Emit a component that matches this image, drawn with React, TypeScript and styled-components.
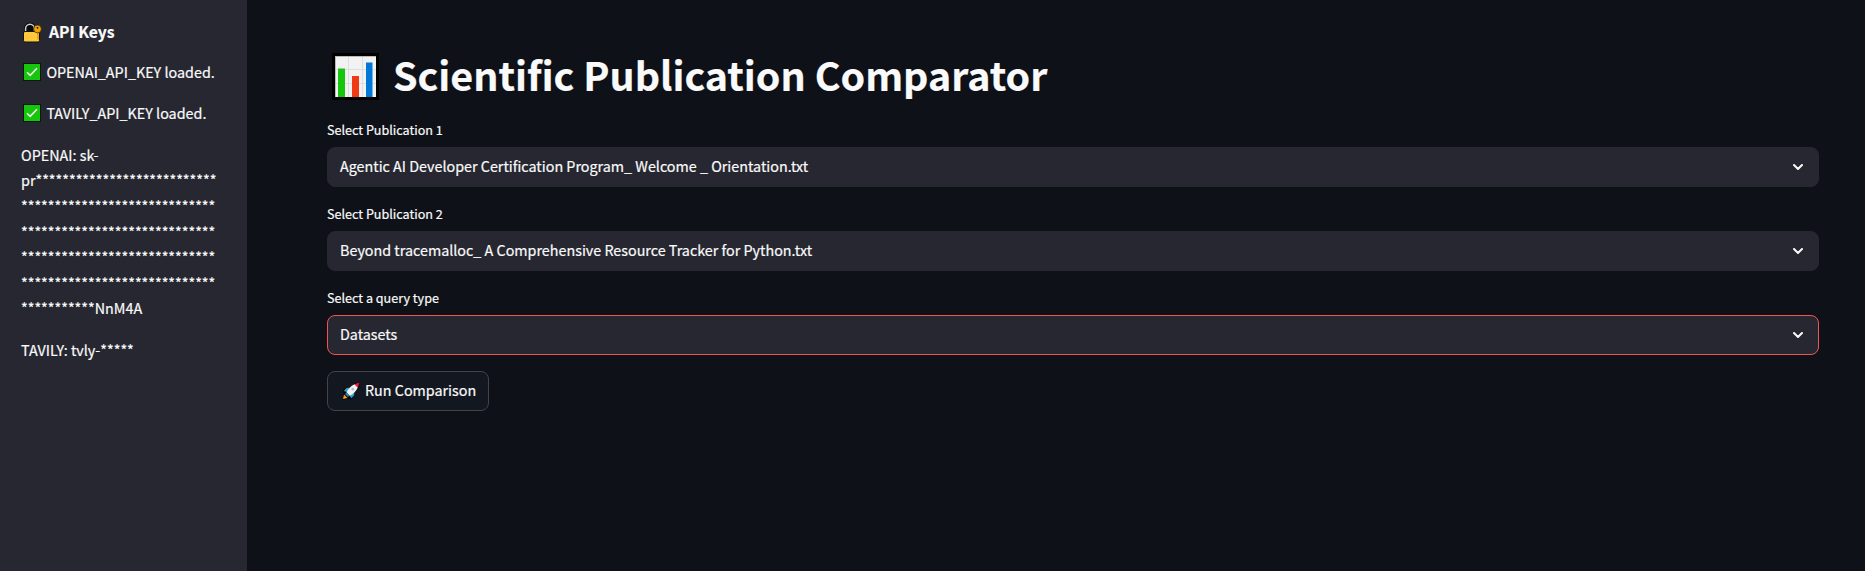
import React from "react";
import styled, { createGlobalStyle } from "styled-components";

const Global = createGlobalStyle`
  *, *::before, *::after { box-sizing: border-box; }
  html, body { margin: 0; padding: 0; background: #0e1117; overflow: hidden; }
  body {
    font-family: "Noto Sans CJK JP", "Noto Sans", sans-serif;
    font-size: 14.35px;
    line-height: 25.6px;
    color: #fafafa;
    -webkit-text-stroke: 0.2px #fafafa;
  }
  h1, h2, p { margin: 0; font-weight: 400; }
  button { font: inherit; color: inherit; }
`;

const Page = styled.div`
  display: flex;
  width: 100%;
  height: 571px;
`;

const Sidebar = styled.aside`
  width: 247px;
  flex: none;
  padding: 19px 20px 0 21px;
  background: #262730;
`;

const SidebarTitle = styled.h2`
  display: flex;
  align-items: center;
  gap: 7px;
  height: 26px;
  margin-bottom: 14px;
  font-size: 15.7px;
  font-weight: 700;
  white-space: nowrap;
`;

const Status = styled.p`
  display: flex;
  align-items: center;
  gap: 5.4px;
  height: 25.6px;
  margin-bottom: 15.8px;
  padding-left: 2px;
  white-space: nowrap;
`;

const KeyText = styled.p`
  margin-bottom: 16px;
  white-space: nowrap;
`;

const Main = styled.main`
  flex: 1;
  padding: 45px 46px 0 80px;
`;

const Title = styled.h1`
  display: flex;
  align-items: center;
  gap: 14px;
  height: 58px;
  margin-bottom: 16px;
  padding-left: 5px;
  font-size: 39.4px;
  line-height: 58px;
  font-weight: 700;
  white-space: nowrap;
`;

const Field = styled.div`
  margin-bottom: 16px;
`;

const Label = styled.div`
  height: 28px;
  line-height: 21px;
  font-size: 12.6px;
`;

const SelectBox = styled.div<{ $focused?: boolean }>`
  display: flex;
  align-items: center;
  justify-content: space-between;
  height: 40px;
  padding: 0 15px 1px 12px;
  border: 1px solid ${(p) => (p.$focused ? "#f05555" : "#262730")};
  border-radius: 8px;
  background: #262730;
`;

const RunButton = styled.button`
  display: flex;
  align-items: center;
  gap: 5px;
  width: 162px;
  height: 40px;
  padding: 0 0 1px 14px;
  border: 1px solid #41444c;
  border-radius: 8px;
  background: #131720;
  white-space: nowrap;
`;

const ControlText = styled.span`
  padding-bottom: 2px;
  font-size: 14.33px;
`;

const Icon = styled.svg`
  display: block;
  flex: none;
`;

const TitleIcon = styled(Icon)`
  margin-top: 4px;
`;

const LockIcon = () => (
  <Icon width="21" height="21" viewBox="0 0 21 21">
    <path d="M4.6 11V6.6a4.4 4.4 0 0 1 8.8 0V11" fill="#0b0b0d" stroke="#0b0b0d" strokeWidth="3.4" />
    <path d="M4.6 11V6.6a4.4 4.4 0 0 1 8.8 0V11" fill="none" stroke="#c9cdd4" strokeWidth="1.5" />
    <rect x="2.5" y="9.5" width="16" height="10.5" rx="1.5" fill="#ffc83d" stroke="#15130d" />
    <path d="M17 9v8.5" stroke="#e8a413" strokeWidth="2" />
    <circle cx="16.5" cy="7" r="3.9" fill="#f0a30a" stroke="#2a1c05" strokeWidth=".7" />
    <circle cx="16.5" cy="5.8" r=".9" fill="#15130d" />
  </Icon>
);

const CheckIcon = () => (
  <Icon width="18" height="18" viewBox="0 0 18 18">
    <rect width="18" height="18" fill="#061b05" />
    <rect x="1" y="1" width="16" height="16" fill="#16c60c" />
    <path d="M4 9.2l3.2 3.1L14 5.2" fill="none" stroke="#f2f2f2" strokeWidth="1.6" />
  </Icon>
);

const ChartIcon = () => (
  <TitleIcon width="47" height="47" viewBox="0 0 47 47">
    <rect width="47" height="47" fill="#000" />
    <rect x="3" y="3" width="41" height="41" fill="#f2f2f2" />
    <path d="M16.5 3v41M30.5 3v41M3 16.5h41M3 30.5h41" stroke="#dedede" />
    <path d="M3.5 44V3.5H44" fill="none" stroke="#a9a9a9" strokeWidth=".8" />
    <rect x="6" y="15.5" width="7" height="28.5" fill="#16c60c" />
    <rect x="20" y="23" width="7" height="21" fill="#f03a17" />
    <rect x="34" y="9.5" width="6.5" height="34.5" fill="#0078d7" />
  </TitleIcon>
);

const RocketIcon = () => (
  <Icon width="18" height="18" viewBox="0 0 18 18">
    <path d="M1 8l4-3 4-.5L13 1l5-1-.8 5L13 10l-.5 4-3 3.5L6 17l-5 1 .5-5z" fill="#05070a" />
    <path d="M1.8 9L4.5 6l3-.5L5 10zM9.5 16.2l2.7-3 .2-3L7.5 13.5z" fill="#2ba3d4" />
    <path d="M4.5 10.5Q7 4.5 13 2l3 3q-2.5 6-8.3 8.7z" fill="#f2f2f2" />
    <path d="M12.2 2.3L17.5.6l-1.7 5.2z" fill="#e8203f" />
    <path d="M4.5 10.5l3.2 3L6 15l-3-3z" fill="#1787bd" />
    <path d="M1 17l1-4.5L5.5 16z" fill="#ff9b21" />
    <circle cx="10.8" cy="7.2" r="1.4" fill="#b7bdc3" />
  </Icon>
);

const Chevron = () => (
  <Icon width="10" height="6" viewBox="0 0 10 6">
    <path d="M1 1l4 4 4-4" fill="none" stroke="#fafafa" strokeWidth="2" strokeLinecap="round" />
  </Icon>
);

const fields = [
  { label: "Select Publication 1", value: "Agentic AI Developer Certification Program_ Welcome _ Orientation.txt" },
  { label: "Select Publication 2", value: "Beyond tracemalloc_ A Comprehensive Resource Tracker for Python.txt" },
  { label: "Select a query type", value: "Datasets", focused: true },
];

const fullMask = "*".repeat(29);

export default function App() {
  return (
    <Page>
      <Global />
      <Sidebar>
        <SidebarTitle><LockIcon />API Keys</SidebarTitle>
        <Status><CheckIcon />OPENAI_API_KEY loaded.</Status>
        <Status><CheckIcon />TAVILY_API_KEY loaded.</Status>
        <KeyText>
          OPENAI: sk-<br />
          pr{"*".repeat(27)}<br />
          {fullMask}<br />
          {fullMask}<br />
          {fullMask}<br />
          {fullMask}<br />
          {"*".repeat(11)}NnM4A
        </KeyText>
        <KeyText>TAVILY: tvly-*****</KeyText>
      </Sidebar>
      <Main>
        <Title><ChartIcon />Scientific Publication Comparator</Title>
        {fields.map((f) => (
          <Field key={f.label}>
            <Label>{f.label}</Label>
            <SelectBox $focused={f.focused}>
              <ControlText>{f.value}</ControlText>
              <Chevron />
            </SelectBox>
          </Field>
        ))}
        <RunButton><RocketIcon /><ControlText>Run Comparison</ControlText></RunButton>
      </Main>
    </Page>
  );
}
